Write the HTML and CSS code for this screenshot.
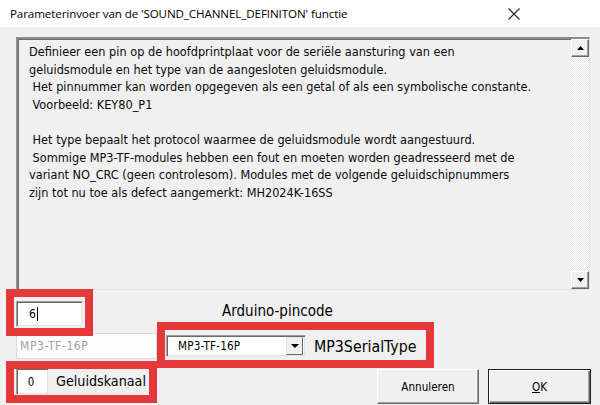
FILE: index.html
```html
<!DOCTYPE html>
<html>
<head>
<meta charset="utf-8">
<link rel="stylesheet" href="styles.css">
</head>
<body>
<div class="dialog">
  <div class="titlebar">
    <span class="title">Parameterinvoer van de 'SOUND_CHANNEL_DEFINITON' functie</span>
    <svg class="close" width="12" height="12" viewBox="0 0 12 12"><path d="M0.5 0.5 L11.5 11.5 M11.5 0.5 L0.5 11.5" stroke="#222" stroke-width="1.1" fill="none"/></svg>
  </div>
  <div class="body">
    <div class="memo">
      <div class="memo-text">Definieer een pin op de hoofdprintplaat voor de seriële aansturing van een
geluidsmodule en het type van de aangesloten geluidsmodule.
 Het pinnummer kan worden opgegeven als een getal of als een symbolische constante.
 Voorbeeld: KEY80_P1

 Het type bepaalt het protocol waarmee de geluidsmodule wordt aangestuurd.
 Sommige MP3-TF-modules hebben een fout en moeten worden geadresseerd met de
variant NO_CRC (geen controlesom). Modules met de volgende geluidschipnummers
zijn tot nu toe als defect aangemerkt: MH2024K-16SS</div>
      <div class="vscroll">
        <div class="sbtn"><svg width="7" height="4" viewBox="0 0 7 4"><path d="M3.5 0 L7 4 L0 4 Z" fill="#000"/></svg></div>
        <div class="track"></div>
        <div class="sbtn"><svg width="7" height="4" viewBox="0 0 7 4"><path d="M0 0 L7 0 L3.5 4 Z" fill="#000"/></svg></div>
      </div>
    </div>
    <div class="row row-a">
      <div class="field pin"><span>6</span><span class="caret"></span></div>
      <span class="label pinlabel">Arduino-pincode</span>
    </div>
    <div class="row row-b">
      <div class="field disabled">MP3-TF-16P</div>
      <div class="field combo">
        <span class="combo-text">MP3-TF-16P</span>
        <span class="dropbtn"><svg width="8" height="4" viewBox="0 0 8 4"><path d="M0 0 L8 0 L4 4 Z" fill="#000"/></svg></span>
      </div>
      <span class="label typelabel">MP3SerialType</span>
    </div>
    <div class="row row-c">
      <div class="field chan">0</div>
      <span class="label chanlabel">Geluidskanaal</span>
      <div class="buttons">
        <button class="btn">Annuleren</button>
        <button class="btn default"><u>O</u>K</button>
      </div>
    </div>
  </div>
  <div class="mark mark1"></div>
  <div class="mark mark2"></div>
  <div class="mark mark3"></div>
</div>
</body>
</html>
```
FILE: styles.css
```css
* { box-sizing: border-box; }
html, body { margin: 0; padding: 0; }
body {
  width: 600px;
  height: 405px;
  overflow: hidden;
  background: #f0f0f0;
  font-family: "DejaVu Sans Condensed", "DejaVu Sans", Tahoma, sans-serif;
}
.dialog {
  position: relative;
  width: 600px;
  height: 405px;
  background: #f0f0f0;
}
.titlebar {
  height: 27px;
  background: #ffffff;
  display: flex;
  align-items: center;
  justify-content: space-between;
  padding: 0 80px 0 10px;
}
.title {
  font-family: "Open Sans", "Noto Sans", sans-serif;
  font-size: 11.6px;
  color: #000;
  letter-spacing: -0.1px;
}
.close { display: block; }
.body {
  padding: 10px 9px 0 16px;
}
.memo {
  width: 574px;
  height: 253px;
  display: flex;
  border-top: 2px solid #8c8c8c;
  border-left: 2px solid #8c8c8c;
  border-right: 1px solid #e3e3e3;
  border-bottom: 1px solid #e3e3e3;
  box-shadow: inset 1px 1px 0 #6a6a6a;
}
.memo-text {
  flex: 1;
  white-space: pre;
  font-size: 12.6px;
  line-height: 17.6px;
  color: #0a0a0a;
  padding: 4px 0 0 11px;
  overflow: hidden;
}
.vscroll {
  width: 18px;
  display: flex;
  flex-direction: column;
}
.sbtn {
  height: 18px;
  display: flex;
  align-items: center;
  justify-content: center;
  background: #f0f0f0;
  border-top: 1px solid #fff;
  border-left: 1px solid #fff;
  border-right: 1px solid #696969;
  border-bottom: 1px solid #696969;
  box-shadow: inset -1px -1px 0 #a0a0a0;
}
.sbtn svg { display: block; }
.track {
  flex: 1;
  background: repeating-conic-gradient(#ffffff 0 25%, #e6e6e6 0 50%) 0 0 / 2px 2px;
}
.row {
  display: flex;
  align-items: center;
}
.field {
  background: #fff;
  border-top: 1px solid #a0a0a0;
  border-left: 1px solid #a0a0a0;
  border-right: 1px solid #f0f0f0;
  border-bottom: 1px solid #f0f0f0;
  box-shadow: inset 1px 1px 0 #696969, inset -1px -1px 0 #e3e3e3;
  font-size: 11px;
  display: flex;
  align-items: center;
}
.row-a { margin-top: 11px; height: 26px; }
.pin {
  width: 67px;
  height: 26px;
  padding-left: 12px;
  font-size: 12px;
  color: #000;
}
.caret {
  display: inline-block;
  width: 1px;
  height: 14px;
  background: #000;
  margin-left: 1px;
}
.label { color: #000; }
.pinlabel {
  margin-left: 139px;
  font-size: 15px;
  position: relative;
  top: -3px;
}
.row-b { margin-top: 6px; height: 26px; }
.disabled {
  width: 141px;
  height: 26px;
  padding-left: 3px;
  color: #a0a0a0;
  background: #fdfdfd;
  box-shadow: none;
  border: 1px solid #dcdcdc;
  font-size: 12px;
  letter-spacing: 0.6px;
}
.combo {
  width: 140px;
  height: 22px;
  margin-left: 9px;
  justify-content: space-between;
  padding: 2px;
  color: #000;
}
.combo-text { padding-left: 9px; font-size: 11.6px; letter-spacing: 0.2px; }
.dropbtn {
  width: 17px;
  height: 18px;
  display: flex;
  align-items: center;
  justify-content: center;
  background: #f0f0f0;
  border-top: 1px solid #e3e3e3;
  border-left: 1px solid #e3e3e3;
  border-right: 1px solid #696969;
  border-bottom: 1px solid #696969;
}
.typelabel {
  margin-left: 8px;
  font-size: 15.8px;
}
.row-c { margin-top: 9px; height: 36px; align-items: flex-start; }
.chan {
  width: 33px;
  height: 27px;
  justify-content: center;
  padding-right: 3px;
  font-size: 11.4px;
}
.chanlabel {
  margin-left: 7px;
  font-size: 14.2px;
  line-height: 27px;
}
.buttons {
  margin-left: auto;
  display: flex;
  gap: 9px;
  margin-top: 1px;
}
.btn {
  font-family: "DejaVu Sans Condensed", "DejaVu Sans", Tahoma, sans-serif;
  font-size: 11.6px;
  color: #000;
  width: 102px;
  height: 35px;
  padding: 0;
  background: #f0f0f0;
  border-top: 1px solid #ffffff;
  border-left: 1px solid #ffffff;
  border-right: 1px solid #696969;
  border-bottom: 1px solid #696969;
  box-shadow: inset -1px -1px 0 #a0a0a0;
}
.btn.default {
  width: 103px;
  border: 1px solid #1e1e1e;
  box-shadow: inset 1px 1px 0 #fff, inset -1px -1px 0 #696969, inset -2px -2px 0 #a0a0a0;
}
.mark {
  position: absolute;
  border: 8px solid #e5383b;
  pointer-events: none;
}
.mark1 { left: 6px; top: 289px; width: 87px; height: 47px; }
.mark2 { left: 157px; top: 322px; width: 277px; height: 46px; }
.mark3 { left: 6px; top: 361px; width: 151px; height: 42px; }
```
